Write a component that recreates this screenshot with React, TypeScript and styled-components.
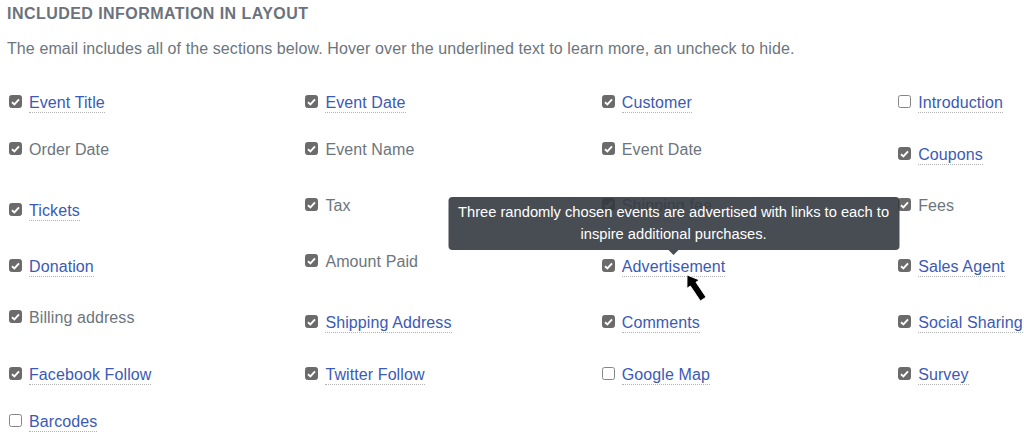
import React from 'react';
import styled, { createGlobalStyle } from 'styled-components';

type Field = { label: string; link?: boolean; off?: boolean; tip?: string };

const ROWS: Field[][] = [
  [
    { label: 'Event Title', link: true },
    { label: 'Event Date', link: true },
    { label: 'Customer', link: true },
    { label: 'Introduction', link: true, off: true },
  ],
  [
    { label: 'Order Date' },
    { label: 'Event Name' },
    { label: 'Event Date' },
    { label: 'Coupons', link: true },
  ],
  [
    { label: 'Tickets', link: true },
    { label: 'Tax' },
    { label: 'Shipping fee' },
    { label: 'Fees' },
  ],
  [
    { label: 'Donation', link: true },
    { label: 'Amount Paid' },
    {
      label: 'Advertisement',
      link: true,
      tip: 'Three randomly chosen events are advertised with links to each to inspire additional purchases.',
    },
    { label: 'Sales Agent', link: true },
  ],
  [
    { label: 'Billing address' },
    { label: 'Shipping Address', link: true },
    { label: 'Comments', link: true },
    { label: 'Social Sharing', link: true },
  ],
  [
    { label: 'Facebook Follow', link: true },
    { label: 'Twitter Follow', link: true },
    { label: 'Google Map', link: true, off: true },
    { label: 'Survey', link: true },
  ],
  [{ label: 'Barcodes', link: true, off: true }],
];

const GlobalStyle = createGlobalStyle`
  html, body {
    margin: 0;
    padding: 0;
    background: #ffffff;
    overflow: hidden;
  }
  body {
    font-family: "Liberation Sans", Arial, sans-serif;
    font-size: 16px;
    line-height: 18px;
    letter-spacing: 0.1px;
  }
`;

const Page = styled.div`
  padding: 4.5px 0 0 7px;
  width: 1024px;
  height: 432px;
  box-sizing: border-box;
`;

const Heading = styled.h3`
  margin: 0;
  font-size: 16px;
  line-height: 18px;
  font-weight: 700;
  letter-spacing: 0.45px;
  color: #6b727c;
`;

const Intro = styled.p`
  margin: 17px 0 0;
  font-size: 16px;
  line-height: 18px;
  color: #6c757d;
`;

const Grid = styled.div`
  margin-top: 31.3px;
  display: grid;
  grid-template-columns: repeat(4, 296.4px);
  grid-template-rows: 52px 56px 56px 56px 52px 47px auto;
`;

const Item = styled.label<{ $link?: boolean }>`
  display: flex;
  align-items: flex-start;
  padding-top: ${p => (p.$link ? '5px' : '0')};
  white-space: nowrap;
`;

const Box = styled.span<{ $on: boolean }>`
  flex: none;
  width: 13px;
  height: 13px;
  margin: 1.3px 7px 0 2px;
  box-sizing: border-box;
  border-radius: 2.5px;
  display: grid;
  place-items: center;
  background: ${p => (p.$on ? '#6b6b6b' : '#ffffff')};
  border: 1px solid ${p => (p.$on ? '#6b6b6b' : '#858585')};
`;

const Label = styled.span`
  color: #6c757d;
`;

const LinkText = styled.span`
  position: relative;
  display: inline-block;
  line-height: 18px;
  color: #3a5ab6;
  border-bottom: 1px dotted #b4b4b4;
`;

const Tip = styled.div`
  position: absolute;
  left: 50%;
  bottom: calc(100% + 8px);
  transform: translateX(-50%);
  width: 451px;
  box-sizing: border-box;
  padding: 4px 8px;
  border-radius: 4px;
  background: rgba(52, 58, 64, 0.9);
  color: #ffffff;
  font-size: 14.7px;
  letter-spacing: 0;
  line-height: 22.5px;
  text-align: center;
  white-space: normal;

  &::after {
    content: '';
    position: absolute;
    left: 50%;
    top: 100%;
    margin-left: -5px;
    border-width: 5px 5px 0;
    border-style: solid;
    border-color: rgba(52, 58, 64, 0.9) transparent transparent;
  }
`;

const Pointer = styled.svg`
  position: absolute;
  left: 55px;
  top: 13px;
  width: 40px;
  height: 40px;
  overflow: visible;
`;

function Check() {
  return (
    <svg width="9" height="8" viewBox="0 0 9 8">
      <path d="M1 4.2 L3.4 6.5 L8 1.4" fill="none" stroke="#fff" strokeWidth="1.9" />
    </svg>
  );
}

function Cursor() {
  return (
    <Pointer viewBox="0 0 40 40">
      <g transform="translate(10 4) rotate(-34)">
        <path
          d="M0 0 L7.5 11 L3.4 11 L3.4 29 L-3.4 29 L-3.4 11 L-7.5 11 Z"
          fill="#000"
          stroke="#fff"
          strokeWidth="0.8"
          strokeLinejoin="round"
        />
      </g>
    </Pointer>
  );
}

export default function App() {
  return (
    <Page>
      <GlobalStyle />
      <Heading>INCLUDED INFORMATION IN LAYOUT</Heading>
      <Intro>
        The email includes all of the sections below. Hover over the underlined text to learn more,
        an uncheck to hide.
      </Intro>
      <Grid>
        {ROWS.flatMap((row, r) =>
          row.map((f, c) => (
            <Item key={`${r}-${c}`} $link={f.link}>
              <Box $on={!f.off}>{!f.off && <Check />}</Box>
              {f.link ? (
                <LinkText>
                  {f.label}
                  {f.tip && (
                    <>
                      <Tip>{f.tip}</Tip>
                      <Cursor />
                    </>
                  )}
                </LinkText>
              ) : (
                <Label>{f.label}</Label>
              )}
            </Item>
          ))
        )}
      </Grid>
    </Page>
  );
}
